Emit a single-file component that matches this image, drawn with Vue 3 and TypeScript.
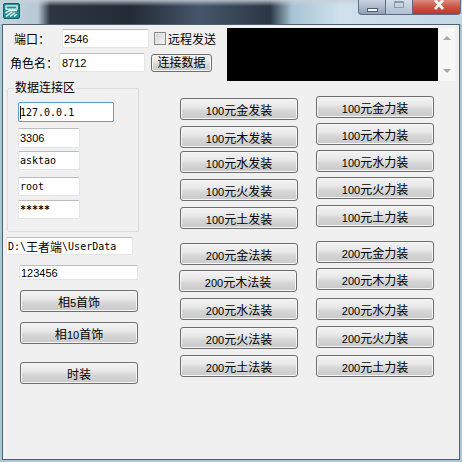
<script setup lang="ts">
interface Btn { num: string; label: string; gap: number; shift?: number }
const elements = ['金', '木', '水', '火', '土']

const makeColumn = (num: string, suffix: string, gaps: number[], shifts: number[] = []): Btn[] =>
  elements.map((el, i) => ({
    num,
    label: `元${el}${suffix}`,
    gap: gaps[i],
    shift: shifts[i] ?? 0,
  }))

const leftColumn: Btn[] = [
  ...makeColumn('100', '发装', [17, 6, 3, 6, 6]),
  ...makeColumn('200', '法装', [14, 5, 6, 7, 6], [0, -1, 0, 0, 0]),
]
const rightColumn: Btn[] = [
  ...makeColumn('100', '力装', [15, 5, 5, 5, 6]),
  ...makeColumn('200', '力装', [14, 5, 8, 6, 7]),
]

const dbFields = [
  { text: '3306', gap: 6, mono: false, heavy: false },
  { text: 'asktao', gap: 3, mono: true, heavy: false },
  { text: 'root', gap: 7, mono: true, heavy: false },
  { text: '*****', gap: 4, mono: true, heavy: true },
]
const sideButtons = [
  { head: '相', num: '5', tail: '首饰', gap: 10 },
  { head: '相', num: '10', tail: '首饰', gap: 10 },
  { head: '时装', num: '', tail: '', gap: 18 },
]
</script>

<template>
  <div class="desktop">
    <header class="titlebar">
      <svg class="app-icon" width="17" height="16" viewBox="0 0 17 16">
        <rect x="0.5" y="0.5" width="16" height="15" rx="1.5" fill="#1f8f93" stroke="#17636c" />
        <path d="M3 2.8h11v3.4H3z" fill="#1f8f93" stroke="#e9f9f6" stroke-width="1.3" />
        <path d="M2.5 10l4-2.6h7.5M3 13.5l6-4.6M7 13.5l5-4M11 13.5l3-2.5" fill="none" stroke="#e9f9f6" stroke-width="1.5" />
      </svg>
      <div class="caption-buttons">
        <div class="cap cap-min"><span class="min-glyph"></span></div>
        <div class="cap cap-max"><span class="max-glyph"></span></div>
        <div class="cap cap-close">
          <svg width="12" height="11" viewBox="0 0 12 11">
            <path d="M2 0l8 9M10 0l-8 9" stroke="#f2f2f2" stroke-width="2.8" fill="none" />
          </svg>
        </div>
      </div>
    </header>

    <main class="client">
      <section class="top-band">
        <div class="top-form">
          <div class="row row-port">
            <span class="label">端口：</span>
            <div class="field field-port num">2546</div>
            <span class="check"></span>
            <span class="check-label">远程发送</span>
          </div>
          <div class="row row-role">
            <span class="label">角色名：</span>
            <div class="field field-role num">8712</div>
            <button class="btn btn-connect">连接数据</button>
          </div>
        </div>
        <div class="console"></div>
        <div class="scrollbar">
          <span class="arrow arrow-up"></span>
          <span class="arrow arrow-down"></span>
        </div>
      </section>

      <section class="lower-band">
        <div class="side">
          <fieldset class="group">
            <legend class="legend">数据连接区</legend>
            <div class="field field-host mono"><span class="caret"></span>127.0.0.1</div>
            <div
              v-for="f in dbFields"
              :key="f.text"
              class="field field-db"
              :class="{ mono: f.mono, num: !f.mono, heavy: f.heavy }"
              :style="{ marginTop: f.gap + 'px' }"
            >{{ f.text }}</div>
          </fieldset>
          <div class="field field-path mono">D:\<span class="cjk">王者端</span>\UserData</div>
          <div class="field field-pass num">123456</div>
          <button
            v-for="b in sideButtons"
            :key="b.head + b.num"
            class="btn btn-side"
            :style="{ marginTop: b.gap + 'px' }"
          >{{ b.head }}<span class="num">{{ b.num }}</span>{{ b.tail }}</button>
        </div>

        <div class="column">
          <button
            v-for="b in leftColumn"
            :key="b.num + b.label"
            class="btn btn-item"
            :style="{ marginTop: b.gap + 'px', marginLeft: b.shift + 'px' }"
          ><span class="num">{{ b.num }}</span>{{ b.label }}</button>
        </div>
        <div class="column column-right">
          <button
            v-for="b in rightColumn"
            :key="b.num + b.label"
            class="btn btn-item"
            :style="{ marginTop: b.gap + 'px' }"
          ><span class="num">{{ b.num }}</span>{{ b.label }}</button>
        </div>
      </section>
    </main>
  </div>
</template>

<style>
html, body { margin: 0; padding: 0; }
</style>

<style scoped>
.desktop {
  width: 462px;
  height: 462px;
  box-sizing: border-box;
  padding: 0 2px 2px;
  display: flex;
  flex-direction: column;
  overflow: hidden;
  background: #a9c8d6;
  font-family: "Liberation Sans", "Noto Sans CJK SC", sans-serif;
  font-size: 12px;
  color: #000;
}
.num { font-size: 11px; }
.titlebar {
  height: 24px;
  margin: 0 -2px;
  flex: none;
  display: flex;
  justify-content: space-between;
  align-items: flex-start;
  background:
    linear-gradient(180deg, rgba(200, 208, 216, 0.85) 0, rgba(200, 208, 216, 0) 6px),
    linear-gradient(90deg, #c3d6e0 0, #b7c9d4 38px, #2c3541 50px, #222b36 130px, #46566a 200px, #2a3744 270px, #a7c4d4 292px, #cfe1ec 340px, #c4d8e6 462px);
}
.app-icon { margin: 3px 0 0 3px; }
.caption-buttons {
  display: flex;
  height: 15px;
  margin-right: 1px;
}
.cap {
  box-sizing: border-box;
  display: flex;
  align-items: center;
  justify-content: center;
  border: 1px solid #5e6b80;
  border-top: none;
}
.cap-min {
  width: 28px;
  border-radius: 0 0 0 4px;
  background: linear-gradient(180deg, #c9d2df 0, #aebbcd 50%, #8f9fb8 100%);
}
.cap-max {
  width: 27px;
  border-left: none;
  background: linear-gradient(180deg, #d3dee8 0, #c0cfdc 50%, #aebfd0 100%);
}
.cap-close {
  width: 48px;
  border-left: none;
  border-radius: 0 0 4px 0;
  align-items: flex-start;
  padding-left: 4px;
  background: linear-gradient(180deg, #d98a7c 0, #cc5442 50%, #b8392a 100%);
}
.min-glyph {
  width: 9px;
  height: 2px;
  margin-top: 5px;
  background: #f4f6f8;
  border: 1px solid #4d5a70;
}
.max-glyph {
  width: 8px;
  height: 5px;
  margin-top: -5px;
  border: 1px solid #8c9bac;
  box-shadow: inset 0 1px 0 #8c9bac;
}
.client {
  flex: 1;
  min-height: 0;
  border: 1px solid #51606e;
  background: #f0f0f0;
  display: flex;
  flex-direction: column;
}
.top-band {
  height: 56px;
  flex: none;
  display: flex;
  box-sizing: border-box;
  padding-top: 3px;
}
.top-form {
  width: 224px;
  flex: none;
}
.row {
  display: flex;
  align-items: center;
}
.row-port {
  height: 19px;
  margin-top: 1px;
  padding-left: 11px;
}
.row-port .label { width: 48px; }
.row-role {
  height: 19px;
  margin-top: 5px;
  padding-left: 7px;
}
.row-role .label { width: 49px; }
.label { flex: none; white-space: nowrap; }
.field {
  box-sizing: border-box;
  background: #fff;
  border: 1px solid #e3e4e8;
  border-top-color: #b9bcc2;
  border-radius: 2px;
  display: flex;
  align-items: center;
  padding-left: 2px;
  white-space: nowrap;
  flex: none;
}
.mono {
  font-family: "DejaVu Sans Mono", "Noto Sans CJK SC", monospace;
  font-size: 10px;
}
.cjk {
  font-family: "Noto Sans CJK SC", sans-serif;
  font-size: 12px;
}
.heavy { font-weight: bold; }
.field-port { width: 87px; height: 19px; padding-left: 1px; }
.field-role { width: 86px; height: 19px; }
.check {
  width: 12px;
  height: 13px;
  box-sizing: border-box;
  margin-left: 5px;
  border: 1px solid #8a8a8a;
  background: linear-gradient(135deg, #cfcfcf, #f8f8f8);
  box-shadow: inset 0 0 0 1px #e8e8e8;
  flex: none;
}
.check-label { margin-left: 2px; white-space: nowrap; }
.btn {
  box-sizing: border-box;
  padding: 0;
  margin: 0;
  font: inherit;
  color: #000;
  border: 1px solid #6e6e6e;
  border-radius: 3px;
  background: linear-gradient(180deg, #f3f3f3 0, #e8e8e8 40%, #d6d6d6 60%, #c9c9c9 100%);
  box-shadow: inset 0 0 0 1px #f6f6f6;
  display: block;
  text-align: center;
  flex: none;
}
.btn-connect {
  width: 61px;
  height: 18px;
  margin: 1px 0 0 6px;
  line-height: 14px;
}
.console {
  width: 211px;
  height: 53px;
  background: #000;
  flex: none;
}
.scrollbar {
  width: 17px;
  height: 53px;
  background: #f7f7f7;
  flex: none;
  display: flex;
  flex-direction: column;
  justify-content: space-between;
  align-items: center;
  padding: 8px 0 8px;
  box-sizing: border-box;
}
.arrow {
  width: 0;
  height: 0;
  border-left: 4px solid transparent;
  border-right: 4px solid transparent;
}
.arrow-up { border-bottom: 4px solid #a8a8a8; }
.arrow-down { border-top: 4px solid #a8a8a8; }

.lower-band {
  flex: 1;
  min-height: 0;
  display: flex;
}
.side {
  width: 177px;
  flex: none;
  display: flex;
  flex-direction: column;
}
.group {
  box-sizing: border-box;
  position: relative;
  width: 132px;
  height: 144px;
  margin: 7px 0 0 4px;
  padding: 13px 0 0 10px;
  border: 1px solid #dcdcdc;
  border-radius: 2px;
  min-width: 0;
  display: flex;
  flex-direction: column;
  align-items: flex-start;
}
.legend {
  position: absolute;
  top: -8px;
  left: 6px;
  padding: 0 1px;
  background: #f0f0f0;
  line-height: 14px;
  white-space: nowrap;
}
.field-host {
  width: 96px;
  height: 20px;
  border: 1px solid #5a9fd8;
  border-radius: 2px;
  padding-left: 0;
}
.caret {
  width: 1px;
  height: 13px;
  background: #111;
  margin-left: 1px;
  margin-right: -1px;
  flex: none;
}
.field-db { width: 62px; height: 19px; padding-left: 1px; }
.field-db:nth-of-type(2) { height: 20px; }
.field-path {
  width: 127px;
  height: 18px;
  margin: 5px 0 0 3px;
  padding-left: 1px;
}
.field-pass {
  width: 119px;
  height: 15px;
  margin: 10px 0 0 16px;
  padding-left: 1px;
}
.btn-side {
  width: 118px;
  height: 22px;
  margin-left: 17px;
}
.column {
  width: 118px;
  flex: none;
  display: flex;
  flex-direction: column;
}
.column-right { margin-left: 18px; }
.btn-item {
  width: 118px;
  height: 22px;
}
</style>
